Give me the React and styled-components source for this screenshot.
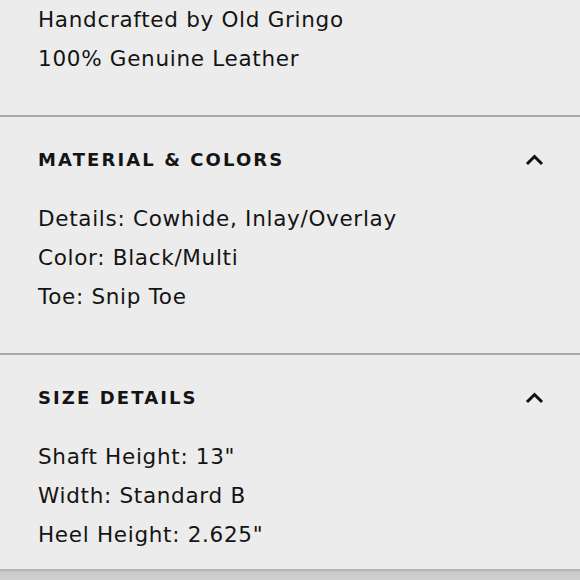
import React from "react";
import styled, { createGlobalStyle } from "styled-components";

const GlobalStyle = createGlobalStyle`
  html, body {
    margin: 0;
    padding: 0;
    background: #ececec;
  }
  body {
    font-family: "DejaVu Sans", "Noto Sans", sans-serif;
    color: #141414;
    overflow: hidden;
  }
`;

const Page = styled.div`
  width: 580px;
  height: 580px;
  display: flex;
  flex-direction: column;
  overflow: hidden;
`;

const Section = styled.section`
  padding: ${({ $top }) => ($top ? "0" : "30px")} 38px
    ${({ $last }) => ($last ? "0" : "37px")} 38px;
  border-bottom: ${({ $last }) => ($last ? "none" : "2px solid #a9a9a9")};
`;

const Header = styled.div`
  display: flex;
  align-items: center;
  justify-content: space-between;
  height: 24px;
  margin-bottom: 28px;
`;

const Title = styled.h3`
  margin: 0;
  font-size: 18px;
  font-weight: 700;
  letter-spacing: 2.1px;
  text-transform: uppercase;
`;

const Toggle = styled.button`
  border: 0;
  background: none;
  padding: 0;
  margin-right: -2px;
  display: flex;
  cursor: pointer;
`;

const Lines = styled.ul`
  list-style: none;
  margin: 0;
  padding: 0;
`;

const Line = styled.li`
  font-size: 21.5px;
  letter-spacing: 0.7px;
  line-height: 39px;
  white-space: nowrap;
`;

const Footer = styled.div`
  flex: 1;
  margin-top: 15px;
  border-top: 2px solid #b4b4b4;
  background: linear-gradient(#c6c6c6, #d2d2d2);
`;

const Chevron = () => (
  <svg width="19" height="13" viewBox="0 0 19 13">
    <path d="M2 11 L9.5 3.5 L17 11" fill="none" stroke="#111" strokeWidth="3" />
  </svg>
);

const sections = [
  { lines: ["Handcrafted by Old Gringo", "100% Genuine Leather"] },
  {
    title: "Material & Colors",
    lines: ["Details: Cowhide, Inlay/Overlay", "Color: Black/Multi", "Toe: Snip Toe"],
  },
  {
    title: "Size Details",
    lines: ['Shaft Height: 13"', "Width: Standard B", 'Heel Height: 2.625"'],
  },
];

const App = () => {
  return (
    <>
      <GlobalStyle />
      <Page>
        {sections.map((s, i) => (
          <Section key={i} $top={!s.title} $last={i === sections.length - 1}>
            {s.title && (
              <Header>
                <Title>{s.title}</Title>
                <Toggle aria-label="collapse">
                  <Chevron />
                </Toggle>
              </Header>
            )}
            <Lines>
              {s.lines.map((l) => (
                <Line key={l}>{l}</Line>
              ))}
            </Lines>
          </Section>
        ))}
        <Footer />
      </Page>
    </>
  );
};

export default App;
